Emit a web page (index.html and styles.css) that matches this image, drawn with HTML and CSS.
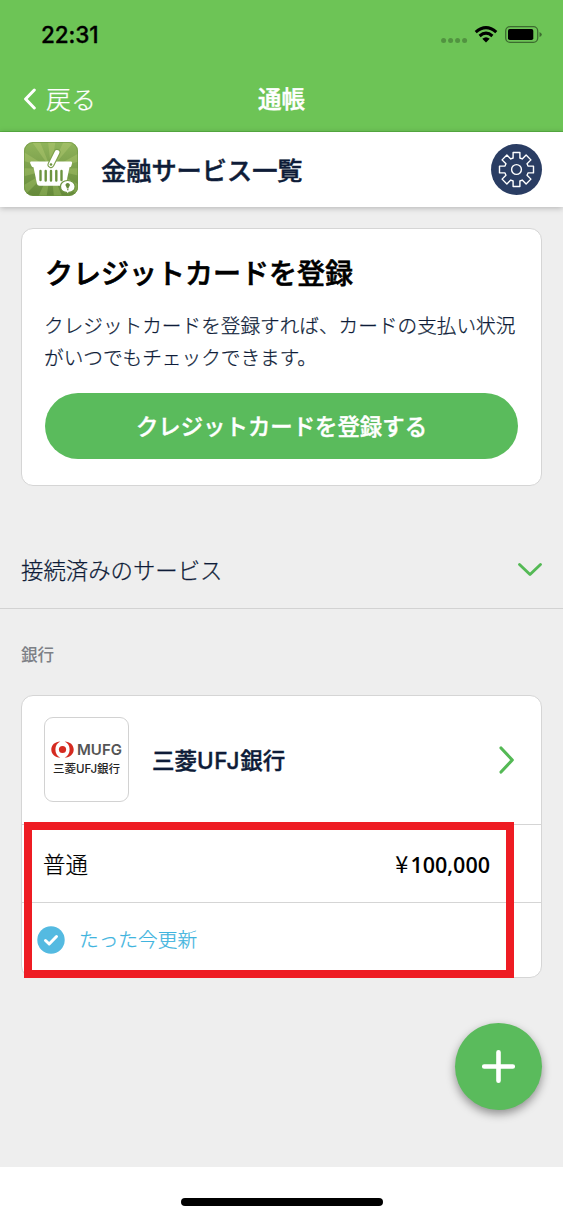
FILE: index.html
```html
<!DOCTYPE html>
<html lang="ja">
<head>
<meta charset="utf-8">
<title>通帳</title>
<link rel="stylesheet" href="styles.css">
</head>
<body>
<div class="screen">
  <header class="top">
    <div class="status">
      <span class="clock">22:31</span>
      <svg class="status-icons" width="102" height="24" viewBox="440 22 102 24">
        <g fill="#000" fill-opacity=".25"><circle cx="443.6" cy="40.4" r="2.5"/><circle cx="450.6" cy="40.4" r="2.5"/><circle cx="457.6" cy="40.4" r="2.5"/><circle cx="464.6" cy="40.4" r="2.5"/></g>
        <g fill="none" stroke="#000" stroke-width="3.1"><path d="M475.7 32.2Q486 23.2 496.3 32.2"/><path d="M479.6 36Q486 30.3 492.4 36"/></g>
        <path d="M482.3 38.8Q486 35.6 489.700 38.8L486 42.500Z"/>
        <rect x="505.700" y="26.700" width="32" height="15.600" rx="4.300" fill="none" stroke="#000" stroke-opacity=".45" stroke-width="1.300"/>
        <rect x="508" y="29" width="25.300" height="11" rx="1.800"/>
        <path d="M539.500 32Q541.800 33 541.800 34.500T539.500 37Z" fill-opacity=".45"/>
      </svg>
    </div>
    <nav class="nav">
      <a class="back"><svg width="14" height="22" viewBox="0 0 14 22"><path d="M11.300 2 2.600 11l8.700 9" fill="none" stroke="#fff" stroke-width="3" stroke-linecap="round" stroke-linejoin="round"/></svg><span>戻る</span></a>
      <h1 class="nav-title">通帳</h1>
    </nav>
  </header>

  <div class="appbar">
    <svg class="logo" width="54" height="54" viewBox="0 0 54 54">
      <defs>
        <linearGradient id="bg" x2="0" y2="1"><stop stop-color="#90b45b"/><stop offset="1" stop-color="#65893a"/></linearGradient>
        <linearGradient id="ray" x2="0" y2="1"><stop stop-color="#a8c46b"/><stop offset="1" stop-color="#779b47"/></linearGradient>
        <clipPath id="clip"><rect width="54" height="54" rx="9"/></clipPath>
      </defs>
      <g clip-path="url(#clip)">
        <rect width="54" height="54" fill="url(#bg)"/>
        <path fill="url(#ray)" d="M27 27 1-10H12ZM27 27 23-10H33ZM27 27 44-10H58ZM27 27 64 6V17ZM27 27 64 26V36ZM27 27 64 48V64ZM27 27 42 64H31ZM27 27 21 64H10ZM27 27-10 64V49ZM27 27-10 37V26ZM27 27-10 16V4Z"/>
      </g>
      <rect x=".5" y=".5" width="53" height="53" rx="8.500" fill="none" stroke="#6d9440" stroke-opacity=".6"/>
      <path d="M7 19.500H47Q48.500 19.500 48 21.500L47.300 24Q47 25.200 45.500 25.200L42 42Q41.600 43.800 39.500 43.800H15.500Q13.400 43.800 13 42L9.500 25.200Q8 25.200 7.500 24L6.300 21.500Q5.600 19.500 7 19.500Z" fill="#fff"/>
      <g stroke="#6d9440" stroke-width="2.400" stroke-linecap="round"><path d="M16.500 29v9M21.700 29v9.500M27 29v9.500M32.300 29v9.500M37.500 29v9"/></g>
      <path d="M27 22.500 33 10.500" stroke="#7b9f4a" stroke-width="7" stroke-linecap="round"/>
      <path d="M27 22.500 33 10.500" stroke="#fff" stroke-width="4.800" stroke-linecap="round"/>
      <circle cx="27" cy="22.500" r="1.300" fill="#6d9440"/>
      <path d="M43.700 38.500c-4.400 0-7.200 2.600-7.200 5.900 0 3.400 2.700 5.500 5.800 5.900l2 2 .6-2c3.700-.5 6.200-2.700 6.200-5.900 0-3.300-2.900-5.900-7.400-5.900Z" fill="#fff" stroke="#6d9440" stroke-width="1.200"/>
      <path d="M43.700 41c-1.400 0-2.200 1-2.200 2.100 0 1.300 1.200 1.800 1.300 3.300h1.800c.1-1.500 1.300-2 1.300-3.300 0-1.100-.8-2.100-2.200-2.100ZM43 47.200h1.500v1H43Z" fill="#64893b"/>
    </svg>
    <h2 class="appbar-title">金融サービス一覧</h2>
    <button class="gear" aria-label="設定">
      <svg width="39" height="39" viewBox="-19.500 -19.500 39 39" fill="none" stroke="#fff" stroke-width="1.400" stroke-linejoin="round"><circle r="4.900"/><path d="M-3.400-11.500V-17H3.400V-11.500L5.730-10.540 9.620-14.420 14.420-9.620 10.540-5.730 11.500-3.400H17V3.400H11.500L10.540 5.730 14.420 9.620 9.620 14.420 5.730 10.540 3.400 11.500V17H-3.400V11.500L-5.730 10.540-9.620 14.420-14.420 9.620-10.540 5.730-11.500 3.400H-17V-3.400H-11.500L-10.540-5.730-14.420-9.620-9.620-14.420-5.730-10.540Z"/></svg>
    </button>
  </div>

  <main class="content">
    <section class="card promo">
      <h3 class="promo-title">クレジットカードを登録</h3>
      <p class="promo-text">クレジットカードを登録すれば、カードの支払い状況<br>がいつでもチェックできます。</p>
      <button class="promo-button">クレジットカードを登録する</button>
    </section>

    <div class="section-head">
      <span>接続済みのサービス</span>
      <svg width="26" height="16" viewBox="0 0 26 16"><path d="M2.500 2.500 13 12.500 23.500 2.500" fill="none" stroke="#54b955" stroke-width="2.900" stroke-linecap="round" stroke-linejoin="round"/></svg>
    </div>

    <div class="group-label">銀行</div>

    <section class="card bank">
      <div class="bank-head">
        <div class="bank-logo">
          <div class="mufg">
            <svg width="23" height="17" viewBox="0 0 23 17"><g fill="#d52a20"><path d="M9.300.4C4 .4.300 4 .3 8.500S4 16.600 9.300 16.600C5.900 15 4.400 12 4.400 8.500S5.900 2 9.300.4Z"/><path d="M13.700.4c5.300 0 9 3.600 9 8.100s-3.700 8.100-9 8.100c3.400-1.600 4.900-4.600 4.900-8.100S17.100 2 13.700.4Z"/><circle cx="11.500" cy="8.500" r="3.600"/></g></svg>
            <span>MUFG</span>
          </div>
          <div class="mufg-sub">三菱UFJ銀行</div>
        </div>
        <span class="bank-name">三菱<span class="latin">UFJ</span>銀行</span>
        <svg width="18" height="30" viewBox="0 0 18 30"><path d="M3 3 14.300 15 3 27" fill="none" stroke="#54b955" stroke-width="3.100" stroke-linecap="round" stroke-linejoin="round"/></svg>
      </div>
      <div class="account">
        <span class="account-type">普通</span>
        <span class="amount"><span class="yen">¥</span>100,000</span>
      </div>
      <div class="updated">
        <svg width="28" height="28" viewBox="0 0 28 28"><circle cx="14" cy="14" r="13.700" fill="#54bae1"/><path d="m8.500 14.500 3.700 3.500 7.300-7.500" fill="none" stroke="#fff" stroke-width="3" stroke-linecap="round" stroke-linejoin="round"/></svg>
        <span>たった今更新</span>
      </div>
      <div class="highlight"></div>
    </section>
  </main>

  <button class="fab" aria-label="追加">
    <svg width="35" height="35" viewBox="0 0 35 35"><path d="M17.500 3.200v28.600M3.200 17.500h28.600" stroke="#fff" stroke-width="4.600" stroke-linecap="round"/></svg>
  </button>
  <footer class="home"><div class="home-bar"></div></footer>
</div>
</body>
</html>
```

FILE: styles.css
```css
* { box-sizing: border-box; margin: 0; padding: 0; }
body { font-family: "Noto Sans CJK JP", sans-serif; color: #0e1c38; background: #eee; }
button { border: 0; font: inherit; }
svg { display: block; flex: none; }
span, h1, h2, h3 { white-space: nowrap; }
.screen { position: relative; width: 563px; height: 1218px; display: flex; flex-direction: column; overflow: hidden; background: #eee; }

.top { height: 132px; background: #6dc456; border-bottom: 1px solid #59b344; }
.status { height: 68px; padding: 0 21px 0 41px; display: flex; align-items: center; justify-content: space-between; }
.clock { padding-top: 1px; font: 500 22.500px/26px Inter, sans-serif; color: #000; -webkit-text-stroke: .3px #000; letter-spacing: -.1px; }
.nav { height: 63px; padding-left: 23px; display: grid; grid-template-columns: 235px auto; align-items: center; color: #fff; }
.back { display: flex; align-items: center; gap: 9px; font-size: 25px; font-weight: 300; line-height: 36px; -webkit-text-stroke: .25px; }
.back span { padding-bottom: 4px; }
.back svg { margin-bottom: 2px; }
.nav-title { padding-bottom: 3px; font-size: 23.500px; font-weight: 500; line-height: 36px; -webkit-text-stroke: .5px #fff; }

.appbar { position: relative; height: 75px; padding: 0 21px 1px 24px; display: flex; align-items: center; background: #fff; box-shadow: 0 1px 6px rgba(0,0,0,.25); }
.appbar-title { flex: 1; margin-left: 23px; padding-bottom: 1px; font-size: 25.200px; font-weight: 500; line-height: 38px; -webkit-text-stroke: .5px #0e1c38; }
.gear { width: 51px; height: 51px; display: grid; place-items: center; border-radius: 50%; background: #2a3d63; }

.content { flex: 1; padding-top: 21px; }
.card { margin: 0 21px; background: #fff; border: 1px solid #d5d5d5; border-radius: 12px; }
.promo { height: 258px; padding: 22px 22px 0; }
.promo-title { padding-left: 1px; color: #000; font-size: 28px; line-height: 42px; font-weight: 500; -webkit-text-stroke: .6px #000; }
.promo-text { margin-top: 16px; font-size: 19.650px; line-height: 31.500px; font-weight: 300; -webkit-text-stroke: .25px; white-space: nowrap; }
.promo-button { display: block; width: 473px; height: 66px; margin: 21px 0 0 1px; padding-bottom: 2px; border-radius: 33px; background: #5abb5c; color: #fff; font-size: 22.400px; font-weight: 500; -webkit-text-stroke: .4px #fff; }

.section-head { height: 123px; padding: 45px 20px 0 21px; display: flex; align-items: center; justify-content: space-between; border-bottom: 1px solid #d2d2d2; font-size: 22.400px; font-weight: 300; -webkit-text-stroke: .25px; }
.section-head span { padding-bottom: 2px; }
.group-label { height: 86px; padding: 32px 21px 0; font-size: 16.600px; line-height: 26px; font-weight: 500; color: #7d8086; }

.bank { position: relative; height: 283px; }
.bank-head { height: 128px; padding: 0 25px 1px 22px; display: flex; align-items: center; }
.bank-logo { width: 85px; height: 85px; padding-bottom: 1px; display: flex; flex-direction: column; align-items: center; justify-content: center; border: 1px solid #d2d2d2; border-radius: 9px; }
.mufg { display: flex; align-items: center; gap: 3px; color: #555; font: 600 15px/20px Inter, sans-serif; }
.mufg-sub { color: #222; font-family: Inter, "Noto Sans CJK JP", sans-serif; font-size: 11.500px; line-height: 19px; font-weight: 500; white-space: nowrap; }
.bank-name { flex: 1; margin-left: 23px; font-size: 22.500px; line-height: 34px; font-weight: 500; -webkit-text-stroke: .4px #0e1c38; }
.latin { font-family: Inter, sans-serif; letter-spacing: .6px; }
.account { height: 78px; padding: 0 51px 0 21px; display: flex; align-items: center; justify-content: space-between; border-top: 1px solid #d5d5d5; color: #000; }
.account-type { padding-bottom: 1px; font-size: 22.400px; font-weight: 300; -webkit-text-stroke: .25px; }
.amount { font: 600 21.500px/32px "Open Sans", sans-serif; }
.yen { margin-right: 2px; font-family: "Noto Sans CJK JP", sans-serif; font-size: 23.500px; font-weight: 400; }
.updated { height: 75px; padding-left: 15px; display: flex; align-items: center; gap: 14px; border-top: 1px solid #d5d5d5; color: #40b4de; font-size: 19.700px; font-weight: 300; -webkit-text-stroke: .25px; }
.updated span { padding-bottom: 3px; }
.highlight { position: absolute; left: 2px; top: 126px; width: 490px; height: 156px; border: 8px solid #ee1c23; }

.fab { position: absolute; right: 21px; top: 1023px; width: 87px; height: 87px; display: grid; place-items: center; border-radius: 50%; background: #5abb5c; box-shadow: 0 4px 10px rgba(0,0,0,.4); }
.home { height: 51px; padding-top: 31px; background: #fff; }
.home-bar { width: 202px; height: 8px; margin: 0 auto; border-radius: 4px; background: #000; }
```
